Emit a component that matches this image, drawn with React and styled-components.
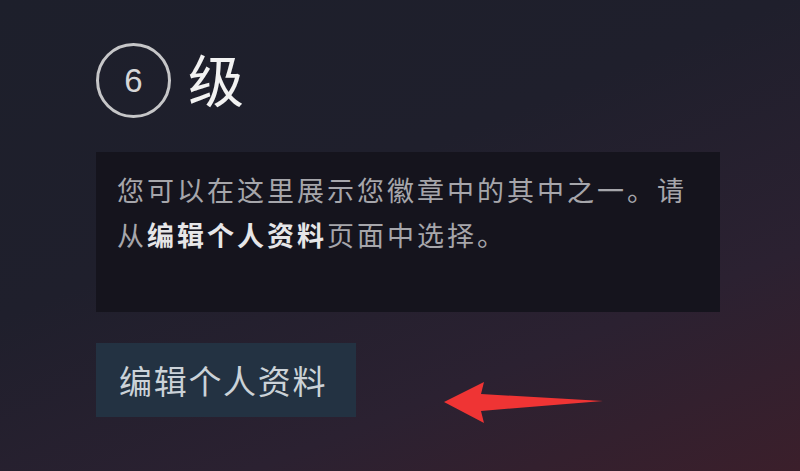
import React from "react";
import styled, { createGlobalStyle } from "styled-components";

const GlobalStyle = createGlobalStyle`
  html, body {
    margin: 0;
    padding: 0;
    background: #1e202c;
  }
  body {
    font-family: "Noto Sans CJK SC", "Noto Sans", sans-serif;
  }
`;

const Page = styled.div`
  width: 800px;
  height: 471px;
  overflow: hidden;
  box-sizing: border-box;
  padding: 43px 0 0 96px;
  background: linear-gradient(158deg, #1d1f2b 0%, #1f1f2c 40%, #2b2131 72%, #3b1f2b 100%);
`;

const LevelRow = styled.div`
  display: flex;
  align-items: center;
  gap: 17px;
`;

const LevelBadge = styled.div`
  width: 75px;
  height: 75px;
  box-sizing: border-box;
  border: 3.5px solid #c6c6c8;
  border-radius: 50%;
  display: flex;
  align-items: center;
  justify-content: center;
  color: #d6d6d8;
  font-family: "Liberation Sans", "Noto Sans", sans-serif;
  font-size: 33px;
  line-height: 1;
`;

const LevelLabel = styled.div`
  color: #f2f2f2;
  font-size: 56px;
  line-height: 1;
  margin-top: -6px;
`;

const Showcase = styled.div`
  margin-top: 34px;
  width: 624px;
  height: 160px;
  box-sizing: border-box;
  padding: 15px 21px 0 21px;
  background: #15141d;
  color: #a6a6ab;
  font-size: 27px;
  letter-spacing: 3px;
  line-height: 45px;
`;

const Strong = styled.span`
  color: #e6e6e8;
  font-weight: 700;
`;

const ActionRow = styled.div`
  margin-top: 31px;
  display: flex;
  align-items: flex-start;
`;

const EditButton = styled.button`
  width: 260px;
  height: 74px;
  box-sizing: border-box;
  padding: 0 0 0 23px;
  border: none;
  background: #233242;
  color: #cbd2d8;
  font-family: "Noto Sans CJK SC", "Noto Sans", sans-serif;
  font-size: 33px;
  letter-spacing: 1.7px;
  text-align: left;
  cursor: pointer;
`;

const Arrow = styled.svg`
  margin: 37px 0 0 87px;
  display: block;
`;

export default function App() {
  return (
    <>
      <GlobalStyle />
      <Page>
        <LevelRow>
          <LevelBadge>6</LevelBadge>
          <LevelLabel>级</LevelLabel>
        </LevelRow>
        <Showcase>
          您可以在这里展示您徽章中的其中之一。请从<Strong>编辑个人资料</Strong>页面中选择。
        </Showcase>
        <ActionRow>
          <EditButton>编辑个人资料</EditButton>
          <Arrow width="162" height="44" viewBox="0 0 162 44">
            <path
              d="M1 22 L41 2 L38 14 L160 21 L38 31 L41 43 Z"
              fill="#ef3434"
            />
          </Arrow>
        </ActionRow>
      </Page>
    </>
  );
}
